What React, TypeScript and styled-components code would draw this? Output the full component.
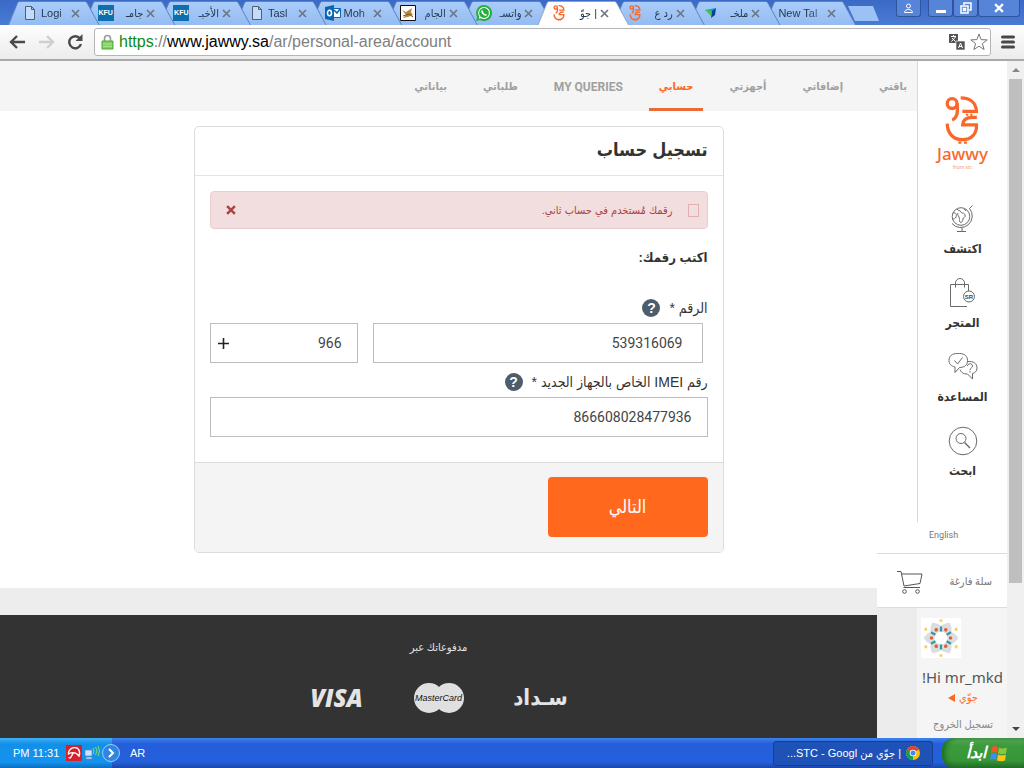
import React from "react";
import styled, { createGlobalStyle } from "styled-components";

const ORANGE = "#ff681d";
const LATIN = '"Liberation Sans", "DejaVu Sans Condensed", "DejaVu Sans", sans-serif';
const BRAND = 'Roboto, "DejaVu Sans Condensed", "DejaVu Sans", sans-serif';

const Global = createGlobalStyle`
  *, *::before, *::after { box-sizing: border-box; }
  body { margin: 0; font-family: ${LATIN}; color: #333; background: #fff; }
  button, input { font-family: inherit; }
  ul { list-style: none; margin: 0; padding: 0; }
  h1, h2, p { margin: 0; }
  a { color: inherit; text-decoration: none; }
  svg { display: block; flex: none; }
`;

const Screen = styled.div`
  min-height: 100vh;
  display: flex;
  flex-direction: column;
  overflow: hidden;
`;

/* ---------- browser chrome ---------- */

const TabStrip = styled.div`
  height: 25px;
  padding-left: 8px;
  display: flex;
  align-items: flex-end;
  background: linear-gradient(#3a69c6, #4a7bd3);
`;

const Tabs = styled.ul`
  flex: 0 1 832px;
  display: flex;
`;

const TabItem = styled.li<{ $active?: boolean; $layer: number }>`
  position: relative;
  z-index: ${(p) => p.$layer};
  flex: 1 0 0;
  height: 24px;
  margin-right: -16px;
  padding: 0 20px 0 14px;
  display: flex;
  align-items: center;
  gap: 3px;
  background: ${(p) => (p.$active ? "#8ea3c4" : "#5c83bd")};
  clip-path: polygon(0 100%, 9px 2px, 11px 0, calc(100% - 14px) 0, calc(100% - 12px) 2px, 100% 100%);
  &::before {
    content: "";
    position: absolute;
    inset: 1px 1px 0;
    z-index: -1;
    background: ${(p) => (p.$active ? "#fff" : "linear-gradient(#a9ccf8, #94bcf3)")};
    clip-path: polygon(0 100%, 9px 1px, 10px 0, calc(100% - 13px) 0, calc(100% - 12px) 1px, 100% 100%);
  }
`;

const TabTitle = styled.span`
  flex: 1;
  min-width: 0;
  white-space: nowrap;
  font: 11px/20px ${LATIN};
  color: #26384f;
  mask-image: linear-gradient(to right, #000 65%, #0006);
  &[dir="rtl"] {
    mask-image: linear-gradient(to left, #000 65%, #0006);
  }
`;

const PlainButton = styled.button`
  padding: 0;
  border: 0;
  background: none;
  display: flex;
  align-items: center;
  justify-content: center;
  color: inherit;
`;

const NewTab = styled.button`
  width: 31px;
  height: 15px;
  margin: 0 0 4px 8px;
  padding: 0;
  border: 0;
  background: #9cc2f5;
  clip-path: polygon(0 0, 25px 0, 100% 100%, 7px 100%);
`;

const WindowControls = styled.div`
  margin-left: auto;
  align-self: flex-start;
  display: flex;
  padding-right: 4px;
`;

const WindowButton = styled(PlainButton)<{ $wide?: boolean; $apart?: boolean }>`
  width: ${(p) => (p.$wide ? 42 : 25)}px;
  height: 17px;
  margin-right: ${(p) => (p.$apart ? 7 : 0)}px;
  border: 1px solid #2f559f;
  border-top: 0;
  border-radius: 0 0 3px 3px;
  background: #5584d8;
`;

const Toolbar = styled.div`
  height: 36px;
  padding: 0 9px;
  display: flex;
  align-items: center;
  gap: 10px;
  background: linear-gradient(#fdfdfd, #ececec);
  border-bottom: 2px solid #a9a9a9;
`;

const Nav = styled.div`
  display: flex;
  align-items: center;
  gap: 12px;
`;

const AddressBar = styled.div`
  flex: 1;
  height: 28px;
  padding: 0 2px 0 6px;
  display: flex;
  align-items: center;
  gap: 5px;
  border: 1px solid #b5b5b5;
  border-radius: 3px;
  background: #fff;
`;

const Url = styled.a`
  flex: 1;
  font: 16px/24px ${LATIN};
  color: #808080;
  span { color: #0b8a1c; }
  b { font-weight: 400; color: #000; }
`;

/* ---------- page ---------- */

const Viewport = styled.div`
  flex: 1;
  display: flex;
  background: #fff;
`;

const Content = styled.main`
  flex: 1;
  min-width: 0;
  display: flex;
  flex-direction: column;
`;

const Menu = styled.ul`
  height: 50px;
  display: flex;
  gap: 16px;
  background: #f5f5f5;
`;

const MenuLink = styled.a<{ $active?: boolean; $latin?: boolean }>`
  height: 50px;
  padding: 5px 10px 0;
  display: flex;
  align-items: center;
  border-bottom: 3px solid ${(p) => (p.$active ? "#ec6a35" : "transparent")};
  font: 700 ${(p) => (p.$latin ? 12 : 11)}px/20px ${BRAND};
  white-space: nowrap;
  color: ${(p) => (p.$active ? ORANGE : "#a0a0a0")};
`;

const Card = styled.form`
  width: calc(100% - 32px);
  max-width: 530px;
  margin: 15px auto 35px;
  border: 1px solid #dcdcdc;
  border-radius: 5px;
  overflow: hidden;
`;

const CardTitle = styled.h1`
  height: 49px;
  padding: 0 15px;
  border-bottom: 1px solid #e4e4e4;
  font: 700 18px/46px ${LATIN};
  color: #333;
`;

const CardBody = styled.div`
  padding: 15px 15px 25px;
`;

const Alert = styled.div`
  height: 38px;
  padding: 0 8px;
  display: flex;
  align-items: center;
  gap: 15px;
  border: 1px solid #ebccd1;
  border-radius: 4px;
  background: #f2dede;
  font: 11px/20px ${LATIN};
  color: #a94442;
  p { flex: 1; }
`;

const MissingGlyph = styled.span`
  width: 11px;
  height: 13px;
  border: 1px solid #e2b0b3;
`;

const AlertClose = styled(PlainButton)`
  width: 24px;
  height: 24px;
`;

const SectionTitle = styled.h2`
  padding: 17px 0 23px;
  font: 700 13px/24px ${LATIN};
  color: #333;
`;

const LabelRow = styled.div`
  height: 30px;
  display: flex;
  align-items: center;
  gap: 9px;
  font: 14px/20px ${LATIN};
  color: #333;
`;

const Help = styled.button`
  width: 18px;
  height: 18px;
  padding: 0;
  border: 0;
  border-radius: 50%;
  background: #4d5d6b;
  color: #fff;
  font: 700 14px/18px ${LATIN};
`;

const NumberRow = styled.div`
  display: flex;
  gap: 15px;
  padding-right: 5px;
  margin-bottom: 4px;
`;

const Box = styled.div<{ $prefix?: boolean; $roomy?: boolean }>`
  flex: ${(p) => (p.$prefix ? "0 0 148px" : "1")};
  min-width: 0;
  height: 40px;
  padding: 0 ${(p) => (p.$roomy ? 19 : 15)}px 0 7px;
  display: flex;
  align-items: center;
  border: 1px solid #bdbdbd;
  background: #fff;
`;

const Field = styled.input`
  flex: 1;
  width: 0;
  min-width: 0;
  padding: 0;
  border: 0;
  outline: 0;
  background: none;
  font: 14px/20px ${BRAND};
  color: #444;
  text-align: right;
`;

const CardFooter = styled.div`
  height: 90px;
  padding: 14px 15px;
  border-top: 1px solid #dcdcdc;
  background: #f4f4f4;
`;

const Submit = styled.button`
  width: 160px;
  height: 60px;
  border: 0;
  border-radius: 4px;
  background: ${ORANGE};
  color: #fff;
  font: 18px/20px ${LATIN};
`;

const Divider = styled.div`
  height: 27px;
  background: #ededed;
`;

const Footer = styled.footer`
  flex: 1;
  min-height: 110px;
  padding: 23px 40px 23px 0;
  display: flex;
  flex-direction: column;
  align-items: center;
  gap: 24px;
  background: #333;
  color: #e4e4e4;
  font: 11px/20px ${BRAND};
`;

const Payments = styled.div`
  display: flex;
  align-items: center;
  gap: 49px;
`;

const Visa = styled.span`
  width: 56px;
  font: italic 800 24px/32px "Open Sans", sans-serif;
  text-align: center;
`;

const Sadad = styled.span`
  width: 56px;
  font: 700 22px/32px "DejaVu Sans Condensed", "DejaVu Sans", sans-serif;
  text-align: center;
`;

const MasterCard = styled.span`
  position: relative;
  width: 50px;
  height: 30px;
  display: flex;
  align-items: center;
  justify-content: center;
  font: italic 500 9px/30px "Liberation Sans", sans-serif;
  color: #111;
  svg { position: absolute; inset: 0; }
  span { position: relative; }
`;

/* ---------- side rail ---------- */

const Rail = styled.aside`
  width: 90px;
  display: flex;
  flex-direction: column;
  position: relative;
`;

const RailMenu = styled.div`
  height: 461px;
  padding-top: 35px;
  border-left: 1px solid #d9d9d9;
  display: flex;
  flex-direction: column;
  align-items: center;
`;

const Brand = styled.a`
  height: 107px;
  display: flex;
  flex-direction: column;
  align-items: center;
  color: #f9682a;
  font: 500 17px/20px "Noto Sans", sans-serif;
  small { font-size: 5px; line-height: 6px; color: #f7a98a; }
`;

const RailLink = styled.a`
  height: 74px;
  display: flex;
  flex-direction: column;
  align-items: center;
  gap: 3px;
  font: 700 12px/22px ${BRAND};
  color: #333;
`;

const RailBottom = styled.div`
  flex: 1;
  width: 130px;
  margin-left: -40px;
  display: flex;
  flex-direction: column;
  background: #fff;
`;

const Language = styled.a`
  height: 31px;
  padding: 3px 0 0 52px;
  font: 9px/20px ${BRAND};
  color: #777;
`;

const Cart = styled.a`
  height: 55px;
  padding: 3px 15px 0 20px;
  display: flex;
  align-items: center;
  justify-content: space-between;
  border: solid #dcdcdc;
  border-width: 1px 0;
  font: 11px/20px ${BRAND};
  color: #777;
`;

const Account = styled.div`
  flex: 1;
  padding: 10px 4px 0;
  border-left: 40px solid #ececec;
  background: #f5f5f5;
  display: flex;
  flex-direction: column;
  white-space: nowrap;
`;

const UserName = styled.p`
  margin-top: 8px;
  font: 15px/22px "Noto Sans", sans-serif;
  color: #555;
`;

const AccountLink = styled.a<{ $accent?: boolean }>`
  padding-right: ${(p) => (p.$accent ? 25 : 10)}px;
  margin-bottom: ${(p) => (p.$accent ? 7 : 0)}px;
  display: flex;
  align-items: center;
  gap: 4px;
  font: 11px/20px ${BRAND};
  color: ${(p) => (p.$accent ? ORANGE : "#888")};
`;

const ScrollBar = styled.div`
  width: 17px;
  display: flex;
  flex-direction: column;
  align-items: center;
  background: #f0f0f0;
`;

const ScrollArrow = styled(PlainButton)`
  width: 13px;
  height: 18px;
`;

const Track = styled.div`
  flex: 1;
  display: flex;
`;

const Thumb = styled.div`
  width: 13px;
  height: 504px;
  background: #bfbfbf;
`;

/* ---------- taskbar ---------- */

const TaskBar = styled.div`
  height: 30px;
  display: flex;
  align-items: center;
  background: linear-gradient(#3b83ec, #245edb 20%, #2460dc 80%, #1b46a9);
  color: #fff;
  font: 11px/20px ${LATIN};
`;

const Tray = styled.div`
  width: 112px;
  height: 30px;
  padding-left: 13px;
  display: flex;
  align-items: center;
  gap: 2px;
  background: linear-gradient(#3fb0f8, #1290e9 20%, #1493ee 80%, #0d6cc0);
`;

const Clock = styled.span`
  flex: 0 0 51px;
  white-space: nowrap;
`;

const Lang = styled.span`
  margin-left: 18px;
`;

const TaskButton = styled.button`
  width: 160px;
  height: 25px;
  margin: 0 9px 0 auto;
  padding: 0 12px;
  display: flex;
  align-items: center;
  gap: 5px;
  border: 1px solid #163f94;
  border-radius: 3px;
  background: #1e52b7;
  color: #fff;
  font: 11px/20px ${LATIN};
  white-space: nowrap;
`;

const Start = styled.button`
  width: 82px;
  height: 30px;
  padding: 0 16px 0 0;
  display: flex;
  align-items: center;
  justify-content: flex-end;
  gap: 4px;
  border: 0;
  border-radius: 12px 0 0 12px;
  background: linear-gradient(#5fae5f, #3b9a3b 25%, #379637 75%, #22702a);
  box-shadow: inset 3px 0 5px #1f6b27;
  color: #fff;
  font: italic 700 16px/28px ${LATIN};
`;

/* ---------- drawings ---------- */

const Cross = ({ size = 9, color = "#6b7480", weight = 1.6 }) => (
  <svg width={size} height={size} viewBox="0 0 9 9" stroke={color} strokeWidth={weight}>
    <path d="M1 1l7 7M8 1l-7 7" />
  </svg>
);

const PageIcon = () => (
  <svg width="16" height="16" viewBox="0 0 16 16" fill="#c4dcfa" stroke="#4f5f75">
    <path d="M3.500 1.500h6l3 3v10h-9zM9.500 1.500v3h3" />
  </svg>
);

const FavBox = styled.span<{ $bg: string }>`
  flex: none;
  width: 16px;
  height: 16px;
  background: ${(p) => p.$bg};
  color: #fff;
  font: 700 7px/16px ${LATIN};
  text-align: center;
`;

const OutlookIcon = () => (
  <svg width="16" height="16" viewBox="0 0 16 16">
    <path fill="#fff" stroke="#0a66b5" d="M8.500 3.500h7v9h-7z" />
    <path d="M9 5l3 3 3-4" fill="none" stroke="#0a66b5" strokeWidth="1.500" />
    <path fill="#0a66b5" d="M0 2l9-2v16l-9-2z" />
    <ellipse cx="4.500" cy="8" rx="2" ry="2.700" fill="none" stroke="#fff" strokeWidth="1.500" />
  </svg>
);

const SketchIcon = () => (
  <svg width="16" height="16" viewBox="0 0 16 16">
    <path fill="#fff" stroke="#111" d="M.5.5h15v15H.5z" />
    <path d="M2 5l4 2 6-4-1 4 2 3-5 2-5 1 3-3z" fill="#b98a3c" />
    <path d="M3 11l6-2 4 3" stroke="#6e5528" fill="none" />
  </svg>
);

const WhatsAppIcon = () => (
  <svg width="16" height="16" viewBox="0 0 16 16">
    <path fill="#25b140" d="M8 0a8 8 0 1 1-3.800 15L0 16l1.100-4A8 8 0 0 1 8 0z" />
    <path fill="#fff" d="M8 2a6 6 0 1 1-3 11.200L2.800 13.800l.6-2.200A6 6 0 0 1 8 2z" />
    <circle cx="8" cy="8" r="4.900" fill="#25b140" />
    <path d="M6 5.500c0 2.500 2 4.500 4.500 4.700" fill="none" stroke="#fff" strokeWidth="1.800" />
  </svg>
);

const LeafIcon = () => (
  <svg width="16" height="16" viewBox="0 0 16 16">
    <path fill="#1b9fd0" d="M2 5l11-2-5 5z" />
    <path fill="#4cc43a" d="M2 5l7 1-1 5z" />
    <path fill="#0e3f96" d="M13 3l-1 7-4 3 1-7z" />
  </svg>
);

const JawwyMark = ({ width = 34, height = 48, weight = 10 }) => (
  <svg width={width} height={height} viewBox="92 49 102 146" fill="none" stroke="#f9682a" strokeWidth={weight}>
    <circle cx="113" cy="72" r="15" />
    <path d="M128 72c4 28 1 44-15 50" />
    <path d="M139 55c30 0 47 16 48 41h-43" />
    <path d="M188 114h-14c-20 0-28 8-29 23h42c2 27-16 45-42 45-28 0-46-18-47-49" />
    <path d="M132 191h9M149 191h9" strokeWidth="7" />
    <path d="M155 106h7M168 106h7" strokeWidth="6" />
  </svg>
);

const GlobeIcon = () => (
  <svg width="32" height="32" viewBox="0 0 32 32" fill="none" stroke="#6a6a6a">
    <circle cx="15" cy="13.500" r="8.800" />
    <path d="M26.500 2.500l-3 3M23.500 5.500A11.300 11.300 0 1 1 6 20.500M16 24.500V28.500M11 28.500h9" />
    <path d="M7 10c3-1 4 2 3 4s-2 2-4 2M11 6c1 2 3 1 4 3s3 0 4 3-2 2-2 4-2 5-3 3 0-3-1-5-2-2-1-4M18 6l2 2" />
  </svg>
);

const BagIcon = () => (
  <svg width="32" height="32" viewBox="0 0 32 32" fill="none" stroke="#6a6a6a">
    <path d="M21 29.500H4.500v-22h18V14M9.500 10.500V6a4.500 4.500 0 0 1 9 0v4.500" />
    <circle cx="23" cy="19.500" r="5.500" fill="#fff" />
    <text x="23" y="21.500" fontSize="6" fontFamily="Liberation Sans" textAnchor="middle" fill="#444" stroke="none">SR</text>
  </svg>
);

const ChatIcon = () => (
  <svg width="32" height="32" viewBox="0 0 32 32" fill="none" stroke="#6a6a6a">
    <path d="M11.500 2.500h2c5 0 8 2.500 8 7s-3 7-8 7L9 21.500v-5.500C5 15 3 13 3 9.500c0-4.500 3-7 8.500-7z" />
    <path d="M8.500 9.500l3 3.500 5-6.500" />
    <path d="M21.500 10.500c6-.5 9.500 2 9.500 6.500 0 3-2 5-4.500 5.500v5.500l-5-5c-4 0-6-1-7.500-4.500" />
    <path d="M21.500 15c0-3 5-3 5 0 0 2-2.500 2-2.500 4M24 20v1.500" />
  </svg>
);

const SearchIcon = () => (
  <svg width="32" height="32" viewBox="0 0 32 32" fill="none" stroke="#6a6a6a">
    <circle cx="16" cy="16" r="13.800" />
    <circle cx="14" cy="13.500" r="5" />
    <path d="M17.500 17.500l5.500 5.500" strokeWidth="1.400" />
  </svg>
);

const CartIcon = () => (
  <svg width="27" height="25" viewBox="0 0 27 25" fill="none" stroke="#555">
    <path d="M0 1.500h4l3 14.500 16-2.500 2-9.500H5M6.500 17.500h16.500" />
    <circle cx="7.500" cy="21.500" r="1.800" />
    <circle cx="20.500" cy="21.500" r="1.800" />
  </svg>
);

const Avatar = () => (
  <svg width="40" height="40" viewBox="0 0 40 40">
    <path fill="#fff" d="M0 0h40v40H0z" />
    {[30, 90, 150, 210, 270, 330].map((a) => (
      <g key={a} transform={`rotate(${a} 20 20)`}>
        <path d="M20 2.500c5 3.500 8 8 5 12.500l-5 2-5-2c-3-4.500 0-9 5-12.500z" fill="#dcdde0" />
        <circle cx="20" cy="10.500" r="1.800" fill="#e5603c" />
      </g>
    ))}
    <circle cx="20" cy="20" r="6.500" fill="#fff" />
    {[0, 60, 120, 180, 240, 300].map((a) => (
      <g key={a} transform={`rotate(${a} 20 20)`}>
        <path d="M20 8.500v5" stroke="#2f9d9c" strokeWidth="2.200" />
        <circle cx="20" cy="2.500" r="1.600" fill="#f3d36b" />
      </g>
    ))}
  </svg>
);

const ChromeIcon = () => (
  <svg width="14" height="14" viewBox="0 0 14 14">
    <circle cx="7" cy="7" r="7" fill="#f4c20d" />
    <path d="M7 7L1 3.500A7 7 0 0 1 13 3.500z" fill="#db4437" />
    <path d="M7 7L1 3.500A7 7 0 0 0 7 14z" fill="#0f9d58" />
    <circle cx="7" cy="7" r="3.300" fill="#fff" />
    <circle cx="7" cy="7" r="2.500" fill="#4285f4" />
  </svg>
);

const WindowsFlag = () => (
  <svg width="18" height="17" viewBox="0 0 18 17">
    <path d="M2 2c2-1.500 4-1.500 6 0L7 8C5 6.700 3 6.700 1 8z" fill="#f0582a" />
    <path d="M9 2.500c3 1.500 5 1 8 0l-1 6c-3 1-5 1-8 0z" fill="#8cc63f" />
    <path d="M1 9c2-1.300 4-1.300 6 0l-1 6c-2-1.500-4-1.500-6 0z" fill="#3f8ff0" />
    <path d="M8 9.500c3 1.300 5 1 8 0l-1 6c-3 1-5 1-8 0z" fill="#fbc61a" />
  </svg>
);

const jawwyFav = <JawwyMark width={16} height={16} weight={13} />;

const TABS: { title: string; icon: React.ReactNode; rtl?: boolean; active?: boolean }[] = [
  { title: "Logi", icon: <PageIcon /> },
  { title: "جامـ", icon: <FavBox $bg="#0d6fae">KFU</FavBox>, rtl: true },
  { title: "الأخبـ", icon: <FavBox $bg="#0d6fae">KFU</FavBox>, rtl: true },
  { title: "Tasl", icon: <PageIcon /> },
  { title: "Moh", icon: <OutlookIcon /> },
  { title: "الجام", icon: <SketchIcon />, rtl: true },
  { title: "واتسـ", icon: <WhatsAppIcon />, rtl: true },
  { title: "| جوّ", icon: jawwyFav, rtl: true, active: true },
  { title: "رد ع", icon: jawwyFav, rtl: true },
  { title: "ملخـ", icon: <LeafIcon />, rtl: true },
  { title: "New Tal", icon: null },
];

const MENU = ["باقتي", "إضافاتي", "أجهزتي", "حسابي", "MY QUERIES", "طلباتي", "بياناتي"];

const RAIL = [
  { label: "اكتشف", icon: <GlobeIcon /> },
  { label: "المتجر", icon: <BagIcon /> },
  { label: "المساعدة", icon: <ChatIcon /> },
  { label: "ابحث", icon: <SearchIcon /> },
];

function BrowserChrome() {
  return (
    <header>
      <TabStrip>
        <Tabs>
          {TABS.map((t, i) => (
            <TabItem key={i} $active={t.active} $layer={t.active ? 30 : 20 - i}>
              {t.icon}
              <TabTitle dir={t.rtl ? "rtl" : "ltr"}>{t.title}</TabTitle>
              <PlainButton aria-label="Close tab"><Cross /></PlainButton>
            </TabItem>
          ))}
        </Tabs>
        <NewTab aria-label="New tab" />
        <WindowControls>
          <WindowButton $apart aria-label="Profile">
            <svg width="11" height="11" viewBox="0 0 11 11" fill="none" stroke="#fff">
              <circle cx="5.500" cy="3" r="2" /><path d="M1.500 9.500c0-4 8-4 8 0z" />
            </svg>
          </WindowButton>
          <WindowButton aria-label="Minimize">
            <svg width="12" height="11" viewBox="0 0 12 11"><path d="M1 7h10v3H1z" fill="#fff" /></svg>
          </WindowButton>
          <WindowButton aria-label="Restore">
            <svg width="12" height="12" viewBox="0 0 12 12" fill="none" stroke="#fff" strokeWidth="1.500">
              <path d="M4 3V1h7v7H9M1 4h7v7H1zM3.500 6.500h2v2h-2z" />
            </svg>
          </WindowButton>
          <WindowButton $wide aria-label="Close"><Cross size={10} color="#fff" weight={2} /></WindowButton>
        </WindowControls>
      </TabStrip>
      <Toolbar>
        <Nav>
          <PlainButton aria-label="Back">
            <svg width="17" height="16" viewBox="0 0 17 16" fill="none" stroke="#4a4a4a" strokeWidth="2.400">
              <path d="M16 8H2.500M8 2L2 8l6 6" />
            </svg>
          </PlainButton>
          <PlainButton aria-label="Forward">
            <svg width="17" height="16" viewBox="0 0 17 16" fill="none" stroke="#cfcfcf" strokeWidth="2.400">
              <path d="M1 8h13.500M9 2l6 6-6 6" />
            </svg>
          </PlainButton>
          <PlainButton aria-label="Reload">
            <svg width="17" height="16" viewBox="0 0 17 16" fill="none" stroke="#4a4a4a" strokeWidth="2.400">
              <path d="M13 4.500A6 6 0 1 0 14 10" /><path d="M15.500 0v7h-7z" fill="#4a4a4a" stroke="none" />
            </svg>
          </PlainButton>
        </Nav>
        <AddressBar>
          <svg width="13" height="16" viewBox="0 0 13 16">
            <path d="M3.500 8V4.500a3 3 0 0 1 6 0V8" fill="none" stroke="#9a9a9a" strokeWidth="1.600" />
            <path d="M1 7h11v8H1z" fill="#7ed05e" stroke="#55a43a" />
            <path d="M2 10h9M2 12.500h9" stroke="#a8e78d" />
          </svg>
          <Url href="#"><span>https</span>://<b>www.jawwy.sa</b>/ar/personal-area/account</Url>
          <PlainButton aria-label="Translate">
            <svg width="16" height="16" viewBox="0 0 16 16">
              <path d="M0 0h9v9H0z" fill="#555" />
              <path d="M2 2.500h5M4.500 1v1.500M2.500 7.500l4-4.500M3 4l3.500 3.500" stroke="#fff" fill="none" />
              <path d="M7 7h9v9H7z" fill="#555" stroke="#fff" strokeWidth=".6" />
              <path d="M9.500 14l2-5 2 5M10 12.500h3" stroke="#fff" fill="none" />
            </svg>
          </PlainButton>
          <PlainButton aria-label="Bookmark">
            <svg width="18" height="18" viewBox="0 0 18 18" fill="#fff" stroke="#777">
              <path d="M9 1l2.100 5.600 6.100.3-4.800 3.700 1.700 5.900L9 13.200l-5.100 3.300 1.700-5.900L.8 6.900l6.100-.3z" />
            </svg>
          </PlainButton>
        </AddressBar>
        <PlainButton aria-label="Menu">
          <svg width="14" height="14" viewBox="0 0 14 14" stroke="#484848" strokeWidth="3" strokeLinecap="round">
            <path d="M1.500 2h11M1.500 7h11M1.500 12h11" />
          </svg>
        </PlainButton>
      </Toolbar>
    </header>
  );
}

function AccountForm() {
  return (
    <Card dir="rtl" onSubmit={(e) => e.preventDefault()}>
      <CardTitle>تسجيل حساب</CardTitle>
      <CardBody>
        <Alert role="alert">
          <MissingGlyph />
          <p>رقمك مُستخدم في حساب ثاني.</p>
          <AlertClose type="button" aria-label="إغلاق"><Cross size={10} color="#a94442" weight={2.2} /></AlertClose>
        </Alert>
        <SectionTitle>اكتب رقمك:</SectionTitle>
        <LabelRow>
          <label htmlFor="number">الرقم *</label>
          <Help type="button">?</Help>
        </LabelRow>
        <NumberRow>
          <Box $roomy><Field id="number" dir="ltr" defaultValue="539316069" /></Box>
          <Box $prefix>
            <Field aria-label="رمز الدولة" dir="ltr" defaultValue="966" />
            <svg width="11" height="11" viewBox="0 0 11 11" stroke="#222" strokeWidth="1.600">
              <path d="M5.500 0v11M0 5.500h11" />
            </svg>
          </Box>
        </NumberRow>
        <LabelRow>
          <label htmlFor="imei">رقم IMEI الخاص بالجهاز الجديد *</label>
          <Help type="button">?</Help>
        </LabelRow>
        <Box><Field id="imei" dir="ltr" defaultValue="866608028477936" /></Box>
      </CardBody>
      <CardFooter><Submit type="submit">التالي</Submit></CardFooter>
    </Card>
  );
}

function SideRail() {
  return (
    <Rail>
      <RailMenu>
        <Brand href="#"><JawwyMark /><span>Jawwy</span><small>from stc</small></Brand>
        {RAIL.map((r) => (
          <RailLink href="#" key={r.label}>{r.icon}{r.label}</RailLink>
        ))}
      </RailMenu>
      <RailBottom>
        <Language href="#">English</Language>
        <Cart href="#"><CartIcon /><span>سلة فارغة</span></Cart>
        <Account dir="rtl">
          <div dir="ltr"><Avatar /></div>
          <UserName>Hi mr_mkd!</UserName>
          <AccountLink href="#" $accent>
            جوّي
            <svg width="7" height="8" viewBox="0 0 7 8" fill={ORANGE}><path d="M7 0v8L0 4z" /></svg>
          </AccountLink>
          <AccountLink href="#">تسجيل الخروج</AccountLink>
        </Account>
      </RailBottom>
    </Rail>
  );
}

export default function App() {
  return (
    <Screen>
      <Global />
      <BrowserChrome />
      <Viewport>
        <Content>
          <nav dir="rtl">
            <Menu>
              {MENU.map((m) => (
                <li key={m}>
                  <MenuLink href="#" $active={m === "حسابي"} $latin={/^[A-Z]/.test(m)}>{m}</MenuLink>
                </li>
              ))}
            </Menu>
          </nav>
          <AccountForm />
          <Divider />
          <Footer>
            <p dir="rtl">مدفوعاتك عبر</p>
            <Payments>
              <Visa>VISA</Visa>
              <MasterCard>
                <svg width="50" height="30" viewBox="0 0 50 30" fill="#e0e0e0">
                  <circle cx="15" cy="15" r="15" /><circle cx="35" cy="15" r="15" />
                </svg>
                <span>MasterCard</span>
              </MasterCard>
              <Sadad>سـداد</Sadad>
            </Payments>
          </Footer>
        </Content>
        <SideRail />
        <ScrollBar>
          <ScrollArrow aria-label="Scroll up">
            <svg width="8" height="4" viewBox="0 0 8 4" fill="#888"><path d="M4 0l4 4H0z" /></svg>
          </ScrollArrow>
          <Track><Thumb /></Track>
          <ScrollArrow aria-label="Scroll down">
            <svg width="8" height="4" viewBox="0 0 8 4" fill="#444"><path d="M0 0h8L4 4z" /></svg>
          </ScrollArrow>
        </ScrollBar>
      </Viewport>
      <TaskBar>
        <Tray>
          <Clock dir="ltr">PM 11:31</Clock>
          <svg width="16" height="16" viewBox="0 0 16 16">
            <path d="M0 0h16v16H0z" fill="#d8202c" />
            <path d="M2.500 9C2 5 6 1.500 11 3c3 2 3 5 2 8-3-4-6-4.500-10.500-2zM7.500 7.500L5 12c-.5 1.500-2 1-2 0" fill="none" stroke="#fff" strokeWidth="1.400" />
          </svg>
          <svg width="16" height="16" viewBox="0 0 16 16">
            <path d="M1 5h7v6H1zM2 12h6v2H2z" fill="#cfe2f7" stroke="#5b84b5" strokeWidth=".7" />
            <path d="M9 3q2 3 0 6M11.500 2q3 4 0 8M14 1q3 5 0 10" stroke="#7fe06a" fill="none" />
          </svg>
          <svg width="18" height="18" viewBox="0 0 18 18">
            <circle cx="9" cy="9" r="8.500" fill="#2f86e0" stroke="#9ecbf7" />
            <path d="M7 5l4 4-4 4" stroke="#fff" strokeWidth="2" fill="none" />
          </svg>
        </Tray>
        <Lang>AR</Lang>
        <TaskButton dir="rtl"><ChromeIcon /><span>| جوّي من STC - Googl...</span></TaskButton>
        <Start><span>ابدأ</span><WindowsFlag /></Start>
      </TaskBar>
    </Screen>
  );
}
